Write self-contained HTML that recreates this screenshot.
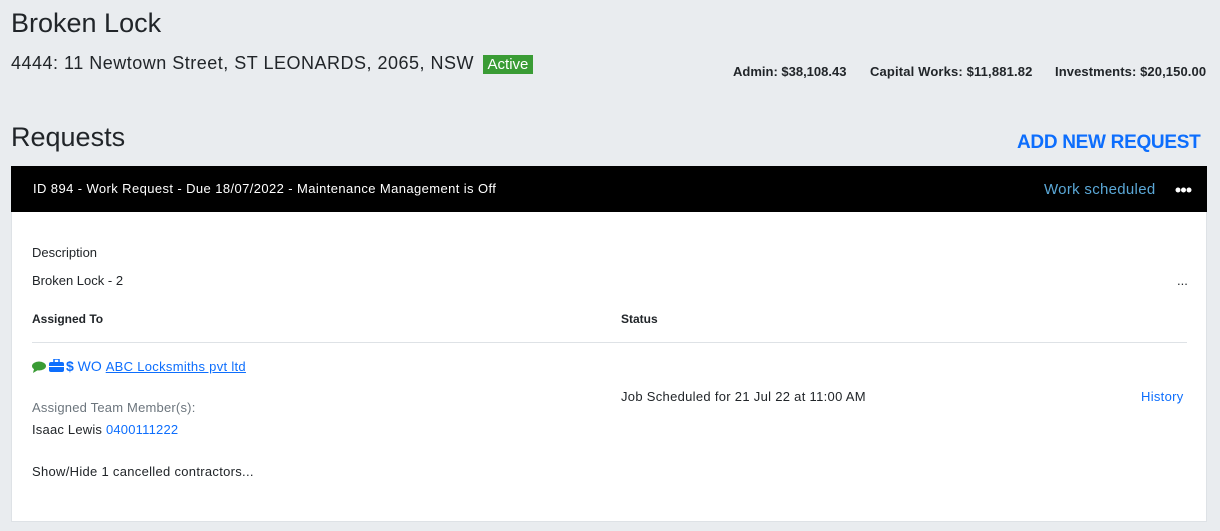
<!DOCTYPE html>
<html><head><style>
body{margin:0;background:#e9ecef;font-family:"Liberation Sans",sans-serif;color:#212529;width:1220px;height:531px;overflow:hidden;position:relative}
.a{position:absolute;white-space:nowrap}
a{color:#0d6efd}
</style></head><body>
<div class="a" style="left:11px;top:8px;font-size:27px">Broken Lock</div>
<div class="a" style="left:11px;top:53px;font-size:18px;letter-spacing:0.5px">4444: 11 Newtown Street, ST LEONARDS, 2065, NSW <span style="background:#3a9c35;color:#fff;font-size:15px;padding:1px 5px;margin-left:3px;letter-spacing:0">Active</span></div>
<div class="a" style="left:733px;top:64px;font-size:13px;font-weight:bold">Admin: $38,108.43</div>
<div class="a" style="left:870px;top:64px;font-size:13px;font-weight:bold;letter-spacing:0.15px">Capital Works: $11,881.82</div>
<div class="a" style="left:1055px;top:64px;font-size:13px;font-weight:bold;letter-spacing:0.1px">Investments: $20,150.00</div>
<div class="a" style="left:11px;top:122px;font-size:27px">Requests</div>
<div class="a" style="left:1017px;top:132px;font-size:19px;font-weight:bold;color:#0d6efd;letter-spacing:-0.3px">ADD NEW REQUEST</div>
<div class="a" style="left:11px;top:166px;width:1196px;height:356px;background:#fff;border:1px solid #dee2e6;box-sizing:border-box"></div>
<div class="a" style="left:11px;top:166px;width:1196px;height:46px;background:#000"></div>
<div class="a" style="left:33px;top:181px;font-size:13px;color:#fff;letter-spacing:0.4px">ID 894 - Work Request - Due 18/07/2022 - Maintenance Management is Off</div>
<div class="a" style="left:1044px;top:181px;font-size:15px;color:#5aa7d6;letter-spacing:0.3px">Work scheduled</div>
<svg class="a" style="left:1175px;top:187px" width="17" height="6"><circle cx="3" cy="3" r="2.5" fill="#fff"/><circle cx="8.5" cy="3" r="2.5" fill="#fff"/><circle cx="14" cy="3" r="2.5" fill="#fff"/></svg>
<div class="a" style="left:32px;top:245px;font-size:13px">Description</div>
<div class="a" style="left:32px;top:273px;font-size:13px">Broken Lock - 2</div>
<div class="a" style="left:1177px;top:273px;font-size:13px">...</div>
<div class="a" style="left:32px;top:312px;font-size:12px;font-weight:bold">Assigned To</div>
<div class="a" style="left:621px;top:312px;font-size:12px;font-weight:bold">Status</div>
<div class="a" style="left:32px;top:342px;width:1155px;height:1px;background:#dee2e6"></div>
<svg class="a" style="left:32px;top:361px" width="14" height="12"><ellipse cx="7" cy="5" rx="7" ry="4.5" fill="#3a9c35"/><path d="M2 8 L1 12 L6 9Z" fill="#3a9c35"/></svg>
<svg class="a" style="left:49px;top:359px" width="15" height="13"><rect x="0" y="3" width="15" height="10" rx="2" fill="#0d6efd"/><rect x="5" y="0" width="5" height="4" fill="none" stroke="#0d6efd" stroke-width="1.5"/><rect x="0" y="7" width="15" height="1" fill="#fff"/></svg>
<div class="a" style="left:66px;top:358px;font-size:14px;color:#0d6efd"><b>$</b> WO <a style="text-decoration:underline;font-size:13px;letter-spacing:0.3px">ABC Locksmiths pvt ltd</a></div>
<div class="a" style="left:32px;top:400px;font-size:13px;color:#6c757d;letter-spacing:0.2px">Assigned Team Member(s):</div>
<div class="a" style="left:32px;top:422px;font-size:13px;letter-spacing:0.2px">Isaac Lewis <span style="color:#0d6efd">0400111222</span></div>
<div class="a" style="left:621px;top:389px;font-size:13px;letter-spacing:0.3px">Job Scheduled for 21 Jul 22 at 11:00 AM</div>
<div class="a" style="left:1141px;top:389px;font-size:13px;color:#0d6efd;letter-spacing:0.3px">History</div>
<div class="a" style="left:32px;top:464px;font-size:13px;letter-spacing:0.3px">Show/Hide 1 cancelled contractors...</div>
</body></html>
